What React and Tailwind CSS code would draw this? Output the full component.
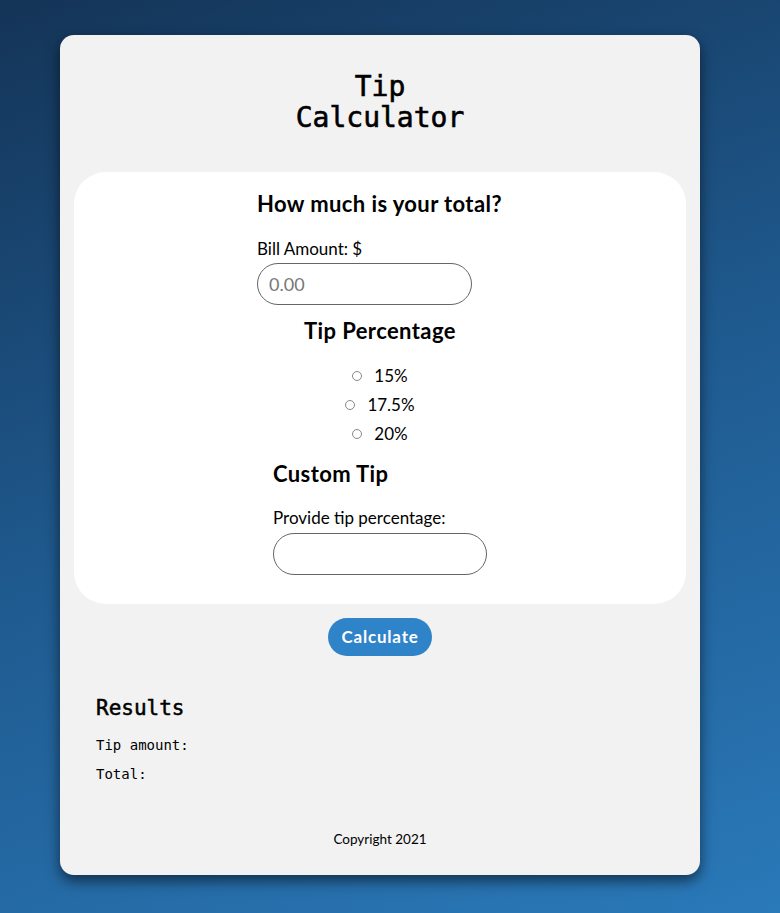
export default function App() {
  const body = { fontFamily: 'Lato, "Noto Sans", sans-serif' };
  const mono = { fontFamily: '"DejaVu Sans Mono", "Liberation Mono", monospace' };
  return (
    <div className="min-h-[913px] w-full bg-[linear-gradient(160deg,#143457_0%,#1f5a8f_50%,#2a79b9_100%)] pt-[35px] pb-[38px]" style={body}>
      <div className="ml-[60px] w-[640px] h-[840px] rounded-[14px] bg-[#f2f2f2] shadow-[0_6px_14px_rgba(0,0,0,0.55)] pt-[36px] px-[14px] flex flex-col">
        <h1 className="text-center text-[28px] leading-[31px] text-black [-webkit-text-stroke:0.6px_black]" style={mono}>
          Tip<br />Calculator
        </h1>
        <div className="mt-[39px] h-[432px] rounded-[32px] bg-white flex flex-col items-center pt-[18px]">
          <div className="w-[246px] text-left">
            <h2 className="text-[22px] font-bold leading-[28px] tracking-[0.4px] text-black whitespace-nowrap">How much is your total?</h2>
            <label className="block mt-[21px] text-[17px] leading-[20px] text-black">Bill Amount: $</label>
            <input
              className="mt-[4px] block w-[215px] h-[42px] rounded-full border border-[#666] px-[11px] text-[18px] placeholder:text-[#777] outline-none"
              placeholder="0.00"
              style={body}
            />
          </div>
          <h2 className="mt-[12px] text-[22px] font-bold leading-[28px] tracking-[0.4px] text-black text-center">Tip Percentage</h2>
          <div className="mt-[21px] flex flex-col items-center gap-[9px]">
            {['15%', '17.5%', '20%'].map((p) => (
              <label key={p} className="flex items-center gap-[12px] text-[17px] leading-[20px] text-black">
                <span className="inline-block w-[10px] h-[10px] rounded-full border border-[#888] bg-white" />
                <span>{p}</span>
              </label>
            ))}
          </div>
          <div className="mt-[16px] w-[214px] text-left">
            <h2 className="text-[22px] font-bold leading-[28px] tracking-[0.4px] text-black">Custom Tip</h2>
            <label className="block mt-[20px] text-[17px] leading-[20px] text-black whitespace-nowrap">Provide tip percentage:</label>
            <input className="mt-[5px] block w-[214px] h-[42px] rounded-full border border-[#666] px-[11px] text-[18px] outline-none" />
          </div>
        </div>
        <div className="mt-[14px] flex justify-center">
          <button className="h-[38px] px-[13px] rounded-full bg-[#2f83c9] text-white font-bold text-[17px] tracking-[0.8px]" style={body}>
            Calculate
          </button>
        </div>
        <div className="mt-[38px] px-[22px] text-black" style={mono}>
          <h3 className="text-[21px] leading-[28px] [-webkit-text-stroke:0.5px_black]">Results</h3>
          <p className="mt-[14px] text-[14px] leading-[18px]">Tip amount:</p>
          <p className="mt-[11px] text-[14px] leading-[18px]">Total:</p>
        </div>
        <p className="mt-[46px] text-center text-[13.5px] text-black">Copyright 2021</p>
      </div>
    </div>
  );
}
